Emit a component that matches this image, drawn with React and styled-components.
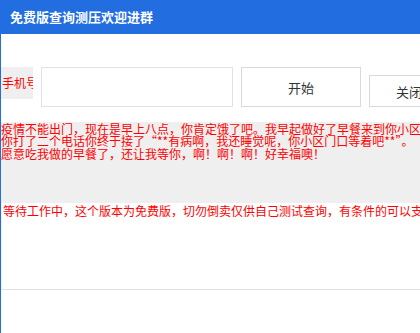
import React from "react";
import styled, { createGlobalStyle } from "styled-components";

const GlobalStyle = createGlobalStyle`
  html, body {
    margin: 0;
    padding: 0;
    overflow: hidden;
    background: #fff;
  }
  body {
    font-family: "Noto Sans CJK SC", "Noto Sans", sans-serif;
  }
`;

const Window = styled.div`
  width: 420px;
  height: 333px;
  overflow: hidden;
  display: flex;
  flex-direction: column;
`;

const TitleBar = styled.div`
  height: 34px;
  flex: none;
  background: #226ee1;
  color: #fff;
  font-size: 13px;
  font-weight: bold;
  display: flex;
  align-items: center;
  padding: 0 0 2px 10px;
  box-sizing: border-box;
`;

const Body = styled.div`
  flex: 1;
  border-left: 1px solid #226ee1;
  display: flex;
  flex-direction: column;
  overflow: hidden;
`;

const Toolbar = styled.div`
  display: flex;
  align-items: flex-start;
  gap: 8px;
  margin-top: 33px;
  width: 600px;
`;

const Label = styled.div`
  width: 32px;
  height: 32px;
  flex: none;
  box-sizing: border-box;
  background: #efefef;
  color: #ff0000;
  font-size: 12px;
  line-height: 32px;
  padding-left: 1px;
  white-space: nowrap;
  overflow: hidden;
`;

const Input = styled.input`
  width: 192px;
  height: 40px;
  flex: none;
  box-sizing: border-box;
  border: 1px solid #e2e2e2;
  outline: none;
  padding: 0 8px;
  font-family: inherit;
`;

const Button = styled.button`
  width: ${(p) => p.w}px;
  height: ${(p) => p.h}px;
  margin-top: ${(p) => 40 - p.h}px;
  flex: none;
  box-sizing: border-box;
  border: 1px solid #d9d9d9;
  background: #fff;
  color: #333;
  font-family: inherit;
  font-size: 13px;
  padding: 0;
  cursor: pointer;
`;

const Notice = styled.div`
  margin-top: 15px;
  height: 81px;
  background: #efefef;
  color: #ff0000;
  font-size: 12px;
  line-height: 12.3px;
  white-space: nowrap;
  overflow: hidden;
  padding-top: 1px;
  box-sizing: border-box;
`;

const Status = styled.div`
  height: 87px;
  border-left: 1px solid #f2f2f2;
  border-bottom: 1px solid #e2e2e2;
  box-sizing: border-box;
  color: #ff0000;
  font-size: 12px;
  line-height: 14px;
  padding: 1px 0 0 1px;
  white-space: nowrap;
  overflow: hidden;
`;

const App = () => {
  return (
    <Window>
      <GlobalStyle />
      <TitleBar>免费版查询测压欢迎进群</TitleBar>
      <Body>
        <Toolbar>
          <Label>手机号</Label>
          <Input type="text" />
          <Button w={120} h={40}>开始</Button>
          <Button w={80} h={32}>关闭</Button>
        </Toolbar>
        <Notice>
          疫情不能出门，现在是早上八点，你肯定饿了吧。我早起做好了早餐来到你小区楼下，给
          <br />
          你打了二个电话你终于接了“**有病啊，我还睡觉呢，你小区门口等着吧**”。
          <br />
          愿意吃我做的早餐了，还让我等你，啊！啊！啊！好幸福噢！
        </Notice>
        <Status>等待工作中，这个版本为免费版，切勿倒卖仅供自己测试查询，有条件的可以支持正版</Status>
      </Body>
    </Window>
  );
};

export default App;
